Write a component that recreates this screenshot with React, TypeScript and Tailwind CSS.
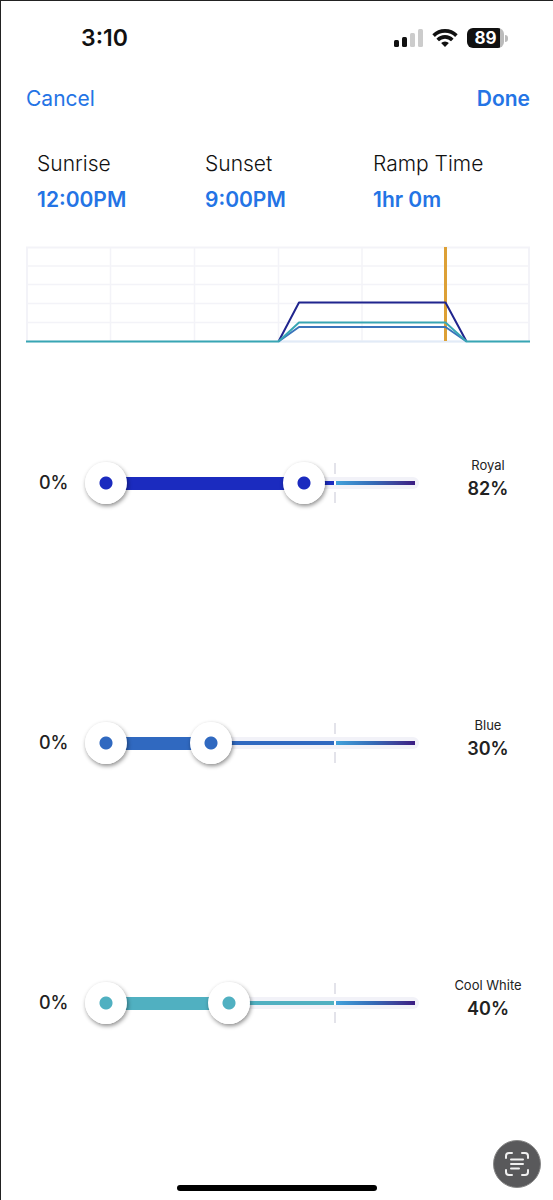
import { useState } from "react"

const FONT = "font-['Inter','Liberation_Sans',sans-serif]"

const schedule = [
  { label: "Sunrise", value: "12:00PM" },
  { label: "Sunset", value: "9:00PM" },
  { label: "Ramp Time", value: "1hr 0m" },
]

// position is where the upper thumb sits along the track, in percent
const channels = [
  { name: "Royal", percent: 82, position: 64, color: "#1b2bbf" },
  { name: "Blue", percent: 30, position: 34, color: "#3069c0" },
  { name: "Cool White", percent: 40, position: 39.7, color: "#50b0c1" },
]

const THUMB =
  "pointer-events-none absolute inset-0 m-0 h-full w-full appearance-none bg-transparent " +
  "[&::-webkit-slider-thumb]:pointer-events-auto [&::-webkit-slider-thumb]:h-[42px] [&::-webkit-slider-thumb]:w-[42px] " +
  "[&::-webkit-slider-thumb]:cursor-pointer [&::-webkit-slider-thumb]:appearance-none [&::-webkit-slider-thumb]:rounded-full " +
  "[&::-webkit-slider-thumb]:bg-[radial-gradient(circle,currentColor_6px,white_7px)] " +
  "[&::-webkit-slider-thumb]:shadow-[1px_2px_4px_rgba(0,0,0,0.45)]"

function StatusBar() {
  return (
    <div className="flex h-[74px] items-center justify-between pr-[45px] pl-20">
      <span className="text-[23px] font-semibold text-[#111]">3:10</span>
      <div className="flex items-center">
        <svg width="29" height="18" viewBox="0 0 29 18" aria-hidden="true">
          <rect x="0" y="11" width="5" height="7" rx="1.5" fill="#111" />
          <rect x="8" y="8" width="5" height="10" rx="1.5" fill="#111" />
          <rect x="16" y="4" width="5" height="14" rx="1.5" fill="#ccc" />
          <rect x="24" y="0" width="5" height="18" rx="1.5" fill="#ccc" />
        </svg>
        <svg className="ml-[9px]" width="26" height="18" viewBox="0 0 26 18" aria-hidden="true">
          <g fill="none" stroke="#111" strokeWidth="3.6">
            <path d="M1.6 6.6a16.2 16.2 0 0 1 22.8 0" />
            <path d="M5.7 10.9a10.3 10.3 0 0 1 14.6 0" />
          </g>
          <path d="M13 18l-3.9-3.9a5.5 5.5 0 0 1 7.8 0z" fill="#111" />
        </svg>
        <div className="ml-[9px] flex h-5 w-[37px] items-center justify-center rounded-md bg-[linear-gradient(90deg,#111_33px,#bbb_33px)] text-[17px] leading-5 font-bold text-white">
          89
        </div>
        <div className="ml-px h-[7px] w-[3px] rounded-r-full bg-[#bbb]" />
      </div>
    </div>
  )
}

function ScheduleChart() {
  return (
    <svg className="block w-full" viewBox="0 0 504 97" role="img" aria-label="Light schedule">
      <g stroke="#f3f3f8" strokeWidth="1.5" fill="none">
        <path d="M84.5 1v94M168.5 1v94M252.5 1v94M336 1v94M419.5 1v94" />
        <path d="M1 20h502M1 38.5h502M1 57.5h502M1 76.5h502" />
        <rect x="1" y="1.5" width="502" height="94" strokeWidth="2" />
      </g>
      <path d="M252 95.5h188" stroke="#e2ebf7" strokeWidth="2" />
      <path d="M419.5 1v94" stroke="#dda035" strokeWidth="3" />
      <g fill="none" strokeWidth="2" strokeLinejoin="round">
        <path d="M252.5 95.5L273 56.5H419.5L440.5 95.5" stroke="#20258e" />
        <path d="M252.5 95.5L273 81H419.5L440.5 95.5" stroke="#3a74bb" />
        <path d="M0 95.5H252.5L273 76.5H419.5L440.5 95.5H504" stroke="#38a6b4" />
      </g>
    </svg>
  )
}

function ChannelRow({ name, percent, position, color }: (typeof channels)[number]) {
  const [low, setLow] = useState(0)
  const [high, setHigh] = useState(position)

  return (
    <div className="flex h-[260px] items-center pr-[13px] pl-[38px]">
      <div className="w-[46px] text-lg font-medium text-[#222]">0%</div>
      <div className="relative h-[42px] flex-1">
        {/* track, inset by the thumb radius so 0 and 100 line up with its ends */}
        <div className="absolute inset-x-[21px] inset-y-0">
          <div className="absolute top-[15px] -right-1 left-0 h-3 rounded-full bg-[#f2f2f8]" />
          <div className="absolute top-[19px] left-0 h-1 w-[74%]" style={{ backgroundColor: color }} />
          <div className="absolute top-[19px] right-0 left-[74%] h-1 bg-linear-to-r from-[#43a4dc] via-[#3468b5] to-[#3b1b82]" />
          <div className="absolute top-[15px] left-0 h-[13px]" style={{ width: `${high}%`, backgroundColor: color }} />
          <div className="absolute inset-y-px left-[74%] flex w-0.5 -translate-x-1/2 flex-col justify-between">
            <div className="h-[11px] bg-[#e3e3ea]" />
            <div className="h-1 bg-white" />
            <div className="h-[11px] bg-[#e3e3ea]" />
          </div>
        </div>
        <input
          type="range"
          aria-label={`${name} minimum`}
          min={0}
          max={100}
          step="any"
          value={low}
          onChange={(e) => setLow(Math.min(Number(e.target.value), high))}
          className={THUMB}
          style={{ color }}
        />
        <input
          type="range"
          aria-label={`${name} maximum`}
          min={0}
          max={100}
          step="any"
          value={high}
          onChange={(e) => setHigh(Math.max(Number(e.target.value), low))}
          className={THUMB}
          style={{ color }}
        />
      </div>
      <div className="w-[104px] pb-2 text-center text-[#222]">
        <div className="text-[13px] leading-5">{name}</div>
        <div className="text-lg leading-7 font-semibold">{percent}%</div>
      </div>
    </div>
  )
}

export default function App() {
  return (
    <div className={`relative flex min-h-screen flex-col border-t border-l border-[#222] bg-white ${FONT}`}>
      <StatusBar />
      <header className="flex h-12 items-center justify-between pr-[23px] pl-[25px] text-[21px] text-[#2474e5]">
        <button type="button">Cancel</button>
        <button type="button" className="font-semibold">Done</button>
      </header>
      <div className="grid grid-cols-3 pt-[23px] pr-3 pl-9 text-[21px]">
        {schedule.map((item) => (
          <div key={item.label}>
            <div className="leading-9 font-light text-[#111]">{item.label}</div>
            <button type="button" className="block leading-9 font-semibold text-[#2474e5]">{item.value}</button>
          </div>
        ))}
      </div>
      <div className="pt-7 pr-[23px] pl-[25px]">
        <ScheduleChart />
      </div>
      <main className="pt-[10px]">
        {channels.map((channel) => (
          <ChannelRow key={channel.name} {...channel} />
        ))}
      </main>
      <div className="mx-auto mt-auto mb-[9px] h-1.5 w-[200px] rounded-full bg-black" />
      <button
        type="button"
        aria-label="Scan text"
        className="absolute right-3 bottom-3 flex h-12 w-12 items-center justify-center rounded-full border border-[#888] bg-[#59595b]"
      >
        <svg width="26" height="26" viewBox="0 0 26 26" fill="none" stroke="#f0f0f0" strokeWidth="2" strokeLinecap="round">
          <path d="M2 7V5a3 3 0 0 1 3-3h3M18 2h3a3 3 0 0 1 3 3v2M24 19v2a3 3 0 0 1-3 3h-3M8 24H5a3 3 0 0 1-3-3v-2" />
          <path d="M7 8.5h12M7 13h12M7 17.5h8" />
        </svg>
      </button>
    </div>
  )
}
